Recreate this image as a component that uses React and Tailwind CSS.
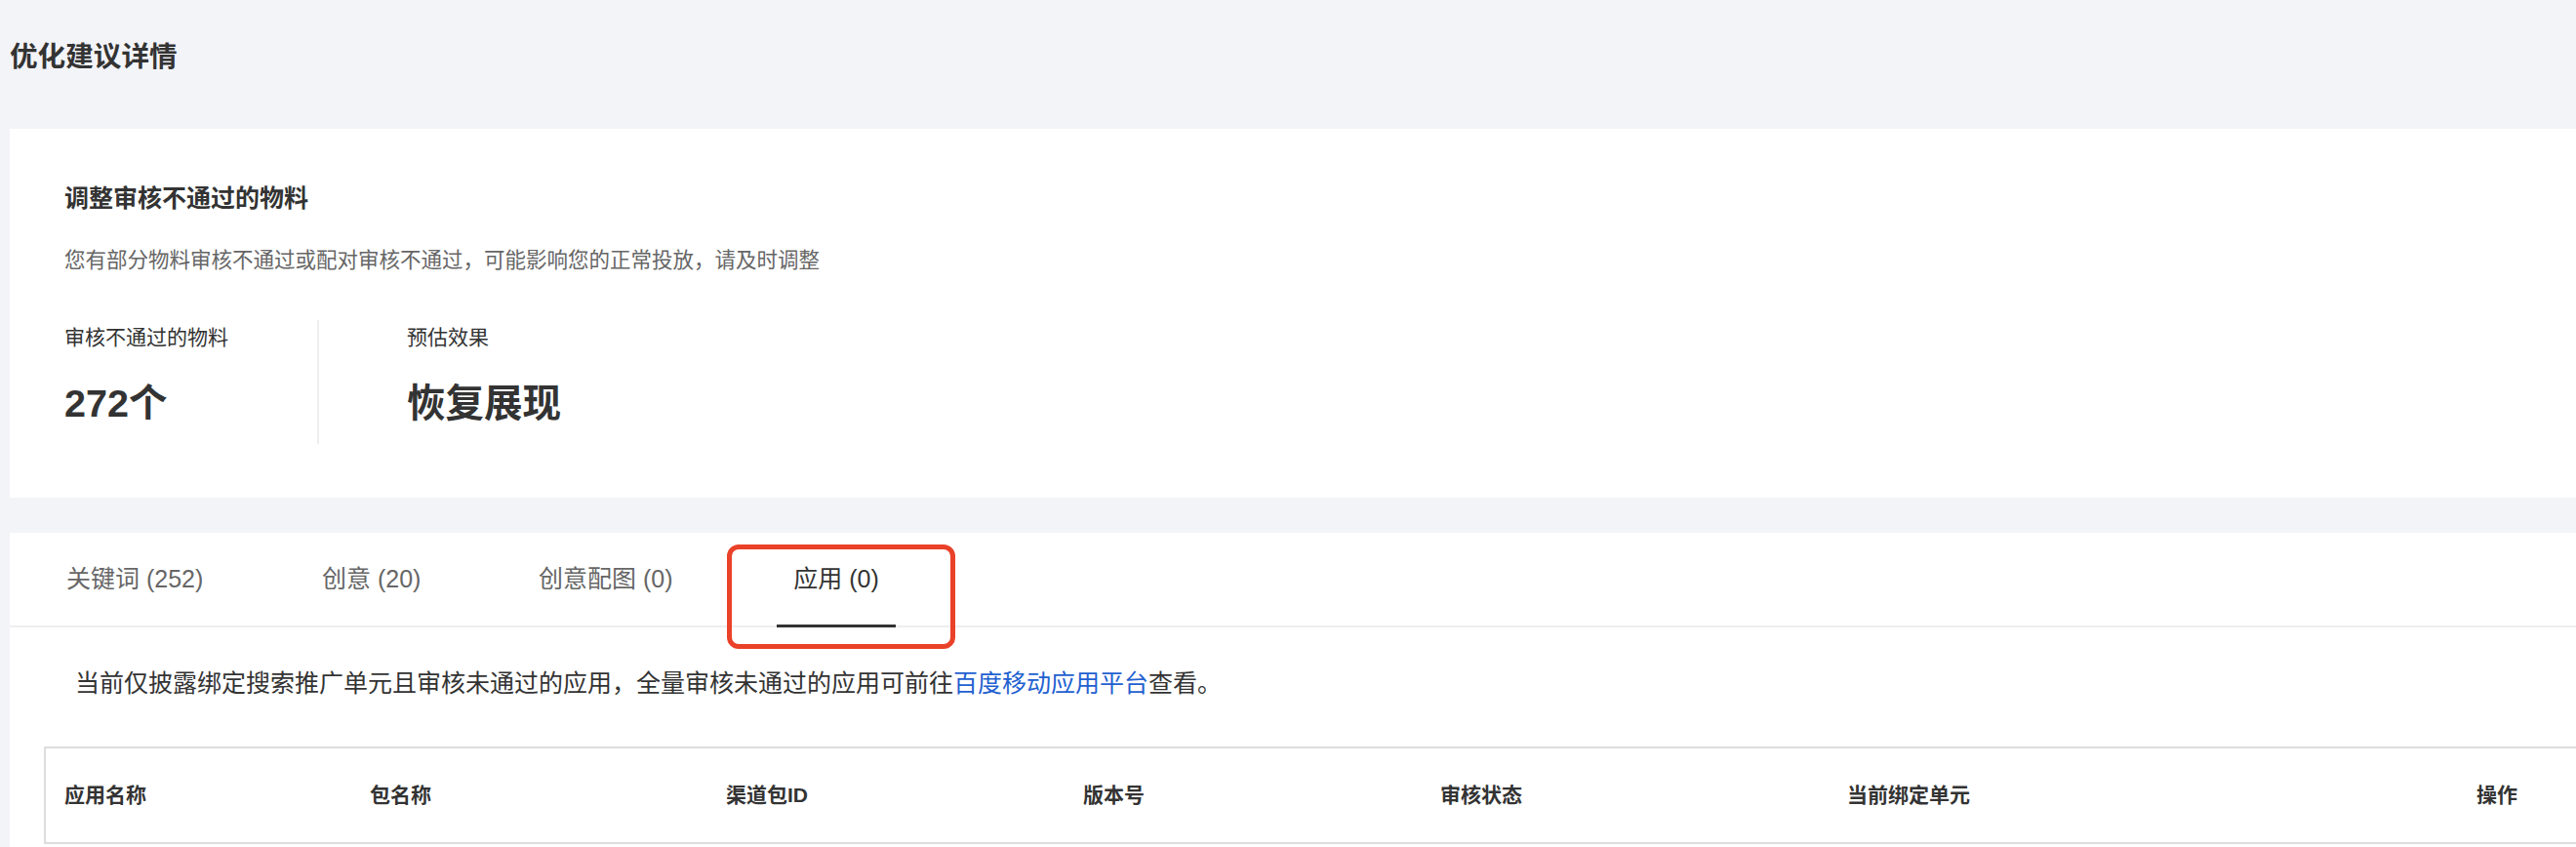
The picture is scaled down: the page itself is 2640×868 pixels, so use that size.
import React from "react";

const FONT = { fontFamily: '"Liberation Sans", "Noto Sans CJK SC", sans-serif' };

const tabs = [
  { label: "关键词 (252)", w: "w-[262px]" },
  { label: "创意 (20)", w: "w-[222px]" },
  { label: "创意配图 (0)", w: "w-[258px]" },
];

const cols = ["应用名称", "包名称", "渠道包ID", "版本号", "审核状态", "当前绑定单元", "操作"];

export default function App() {
  return (
    <div
      className="h-[868px] w-full overflow-hidden bg-[#f3f4f8] pl-[10px] text-[#333333]"
      style={FONT}
    >
      <h1 className="pt-[38px] pb-[54px] text-[28.6px] leading-[40px] font-bold text-[#333333]">
        优化建议详情
      </h1>

      <section className="bg-white pl-[56px] pt-[55px] pb-[55px] h-[378px]">
        <div className="text-[25px] leading-[32px] font-bold text-[#333333]">
          调整审核不通过的物料
        </div>
        <div className="mt-[32px] text-[21.5px] leading-[32px] text-[#666666]">
          您有部分物料审核不通过或配对审核不通过，可能影响您的正常投放，请及时调整
        </div>
        <div className="mt-[45px] flex h-[127px]">
          <div className="w-[261px] border-r-2 border-[#eeeeee] flex flex-col">
            <div className="text-[21px] leading-[36px] text-[#333333]">审核不通过的物料</div>
            <div className="mt-[25px] text-[39.5px] leading-[48px] font-bold text-[#333333]">
              272个
            </div>
          </div>
          <div className="pl-[90px] flex flex-col">
            <div className="text-[21px] leading-[36px] text-[#333333]">预估效果</div>
            <div className="mt-[25px] text-[39.5px] leading-[48px] font-bold text-[#333333]">
              恢复展现
            </div>
          </div>
        </div>
      </section>

      <section className="relative mt-[36px] bg-white overflow-hidden h-[400px]">
        <div className="flex h-[97px] border-b-2 border-[#eeeeee] pl-[44px]">
          {tabs.map((t) => (
            <div
              key={t.label}
              className={`${t.w} flex items-center px-[14px] text-[25px] text-[#666666] whitespace-nowrap`}
            >
              {t.label}
            </div>
          ))}
          <div className="relative flex w-[122px] items-center justify-center text-[25px] text-[#333333] whitespace-nowrap">
            应用 (0)
            <span className="absolute bottom-[-2px] left-0 right-0 h-[3px] bg-[#333333]" />
          </div>
        </div>

        <div className="pl-[67px] pt-[41px] text-[25px] leading-[32px] text-[#333333] whitespace-nowrap">
          当前仅披露绑定搜索推广单元且审核未通过的应用，全量审核未通过的应用可前往
          <a className="text-[#2260d0]">百度移动应用平台</a>
          查看。
        </div>

        <div className="mt-[49px] ml-[35px] w-[2700px] border-t-2 border-l-2 border-b-2 border-[#dddddd]">
          <div className="grid h-[96px] grid-cols-[313px_365px_366px_366px_417px_645px_200px] items-center">
            {cols.map((c) => (
              <div key={c} className="pl-[19px] text-[21px] font-bold text-[#333333] whitespace-nowrap">
                {c}
              </div>
            ))}
          </div>
        </div>

        <div className="pointer-events-none absolute left-[735px] top-[12px] h-[107px] w-[234px] rounded-[12px] border-[5px] border-[#ea4129]" />
      </section>
    </div>
  );
}
